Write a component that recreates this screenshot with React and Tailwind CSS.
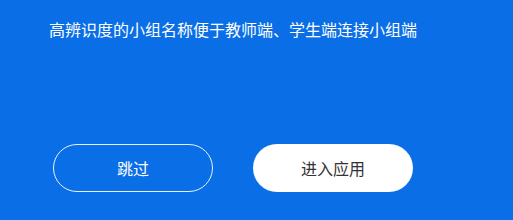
export default function App() {
  return (
    <div
      className="w-[513px] h-[220px] bg-[#0a6fe6] flex flex-col"
      style={{ fontFamily: '"Microsoft YaHei", "Noto Sans CJK SC", sans-serif' }}
    >
      <p className="pl-[49px] pt-[19px] text-[16px] leading-[20px] text-white">
        高辨识度的小组名称便于教师端、学生端连接小组端
      </p>
      <div className="flex gap-[40px] pl-[53px] mt-[105px]">
        <button className="w-[160px] h-[48px] rounded-full border border-white/90 text-white text-[16px]">
          跳过
        </button>
        <button className="w-[160px] h-[48px] rounded-full bg-white text-[#333] text-[16px]">
          进入应用
        </button>
      </div>
    </div>
  );
}
